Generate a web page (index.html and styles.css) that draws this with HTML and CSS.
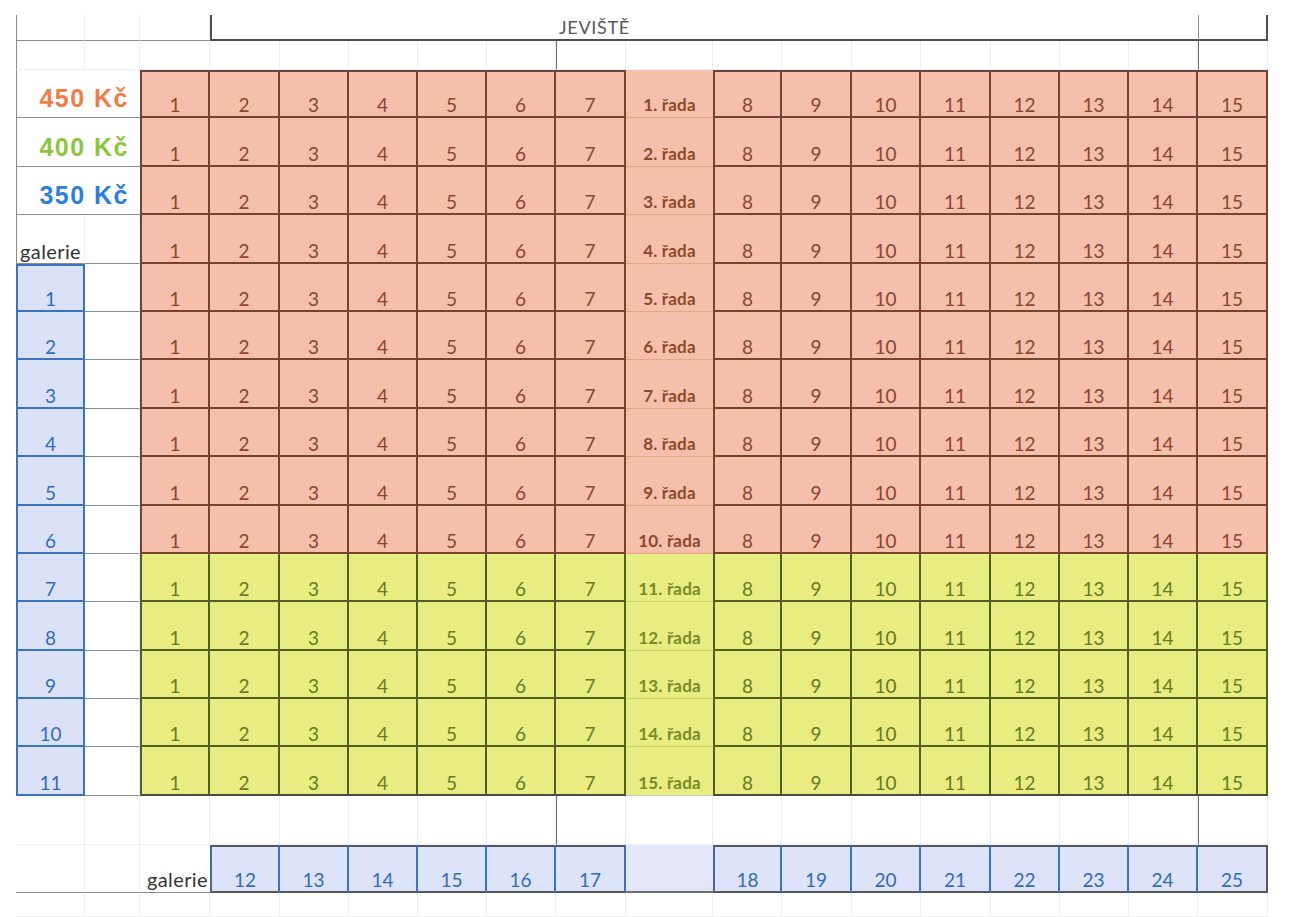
FILE: index.html
```html
<!DOCTYPE html>
<html lang="cs">
<head>
<meta charset="utf-8">
<title>Jeviště – plán sálu</title>
<link rel="stylesheet" href="styles.css">
</head>
<body>
<div class="sheet">
  <!-- row 1: stage -->
  <div class="x lg bk"></div><div class="x bk"></div><div class="x bk"></div>
  <div class="stage-l"></div>
  <div class="stage-m">JEVIŠTĚ</div>
  <div class="stage-r"></div>

  <!-- row 2 -->
  <div class="x lg"></div><div class="x"></div><div class="x"></div>
  <div class="x"></div><div class="x"></div><div class="x"></div><div class="x"></div><div class="x"></div>
  <div class="x vl"></div>
  <div class="x"></div><div class="x"></div><div class="x"></div><div class="x"></div><div class="x"></div><div class="x"></div><div class="x"></div><div class="x"></div>
  <div class="x vl"></div>

  <!-- seat rows -->
  <div class="row pink top">
    <div class="price orange">450 Kč</div>
    <div class="s fl">1</div><div class="s">2</div><div class="s">3</div><div class="s">4</div><div class="s">5</div><div class="s">6</div><div class="s">7</div>
    <div class="r">1. řada</div>
    <div class="s fl">8</div><div class="s">9</div><div class="s">10</div><div class="s">11</div><div class="s">12</div><div class="s">13</div><div class="s">14</div><div class="s">15</div>
  </div>
  <div class="row pink">
    <div class="price green">400 Kč</div>
    <div class="s fl">1</div><div class="s">2</div><div class="s">3</div><div class="s">4</div><div class="s">5</div><div class="s">6</div><div class="s">7</div>
    <div class="r">2. řada</div>
    <div class="s fl">8</div><div class="s">9</div><div class="s">10</div><div class="s">11</div><div class="s">12</div><div class="s">13</div><div class="s">14</div><div class="s">15</div>
  </div>
  <div class="row pink">
    <div class="price blue">350 Kč</div>
    <div class="s fl">1</div><div class="s">2</div><div class="s">3</div><div class="s">4</div><div class="s">5</div><div class="s">6</div><div class="s">7</div>
    <div class="r">3. řada</div>
    <div class="s fl">8</div><div class="s">9</div><div class="s">10</div><div class="s">11</div><div class="s">12</div><div class="s">13</div><div class="s">14</div><div class="s">15</div>
  </div>
  <div class="row pink">
    <div class="x lg bk gal-label">galerie</div><div class="x bk"></div>
    <div class="s fl">1</div><div class="s">2</div><div class="s">3</div><div class="s">4</div><div class="s">5</div><div class="s">6</div><div class="s">7</div>
    <div class="r">4. řada</div>
    <div class="s fl">8</div><div class="s">9</div><div class="s">10</div><div class="s">11</div><div class="s">12</div><div class="s">13</div><div class="s">14</div><div class="s">15</div>
  </div>
  <div class="row pink">
    <div class="gb first">1</div><div class="x bk"></div>
    <div class="s fl">1</div><div class="s">2</div><div class="s">3</div><div class="s">4</div><div class="s">5</div><div class="s">6</div><div class="s">7</div>
    <div class="r">5. řada</div>
    <div class="s fl">8</div><div class="s">9</div><div class="s">10</div><div class="s">11</div><div class="s">12</div><div class="s">13</div><div class="s">14</div><div class="s">15</div>
  </div>
  <div class="row pink">
    <div class="gb">2</div><div class="x bk"></div>
    <div class="s fl">1</div><div class="s">2</div><div class="s">3</div><div class="s">4</div><div class="s">5</div><div class="s">6</div><div class="s">7</div>
    <div class="r">6. řada</div>
    <div class="s fl">8</div><div class="s">9</div><div class="s">10</div><div class="s">11</div><div class="s">12</div><div class="s">13</div><div class="s">14</div><div class="s">15</div>
  </div>
  <div class="row pink">
    <div class="gb">3</div><div class="x bk"></div>
    <div class="s fl">1</div><div class="s">2</div><div class="s">3</div><div class="s">4</div><div class="s">5</div><div class="s">6</div><div class="s">7</div>
    <div class="r">7. řada</div>
    <div class="s fl">8</div><div class="s">9</div><div class="s">10</div><div class="s">11</div><div class="s">12</div><div class="s">13</div><div class="s">14</div><div class="s">15</div>
  </div>
  <div class="row pink">
    <div class="gb">4</div><div class="x bk"></div>
    <div class="s fl">1</div><div class="s">2</div><div class="s">3</div><div class="s">4</div><div class="s">5</div><div class="s">6</div><div class="s">7</div>
    <div class="r">8. řada</div>
    <div class="s fl">8</div><div class="s">9</div><div class="s">10</div><div class="s">11</div><div class="s">12</div><div class="s">13</div><div class="s">14</div><div class="s">15</div>
  </div>
  <div class="row pink">
    <div class="gb">5</div><div class="x bk"></div>
    <div class="s fl">1</div><div class="s">2</div><div class="s">3</div><div class="s">4</div><div class="s">5</div><div class="s">6</div><div class="s">7</div>
    <div class="r">9. řada</div>
    <div class="s fl">8</div><div class="s">9</div><div class="s">10</div><div class="s">11</div><div class="s">12</div><div class="s">13</div><div class="s">14</div><div class="s">15</div>
  </div>
  <div class="row pink">
    <div class="gb">6</div><div class="x bk"></div>
    <div class="s fl">1</div><div class="s">2</div><div class="s">3</div><div class="s">4</div><div class="s">5</div><div class="s">6</div><div class="s">7</div>
    <div class="r">10. řada</div>
    <div class="s fl">8</div><div class="s">9</div><div class="s">10</div><div class="s">11</div><div class="s">12</div><div class="s">13</div><div class="s">14</div><div class="s">15</div>
  </div>
  <div class="row lime">
    <div class="gb">7</div><div class="x bk"></div>
    <div class="s fl">1</div><div class="s">2</div><div class="s">3</div><div class="s">4</div><div class="s">5</div><div class="s">6</div><div class="s">7</div>
    <div class="r">11. řada</div>
    <div class="s fl">8</div><div class="s">9</div><div class="s">10</div><div class="s">11</div><div class="s">12</div><div class="s">13</div><div class="s">14</div><div class="s">15</div>
  </div>
  <div class="row lime">
    <div class="gb">8</div><div class="x bk"></div>
    <div class="s fl">1</div><div class="s">2</div><div class="s">3</div><div class="s">4</div><div class="s">5</div><div class="s">6</div><div class="s">7</div>
    <div class="r">12. řada</div>
    <div class="s fl">8</div><div class="s">9</div><div class="s">10</div><div class="s">11</div><div class="s">12</div><div class="s">13</div><div class="s">14</div><div class="s">15</div>
  </div>
  <div class="row lime">
    <div class="gb">9</div><div class="x bk"></div>
    <div class="s fl">1</div><div class="s">2</div><div class="s">3</div><div class="s">4</div><div class="s">5</div><div class="s">6</div><div class="s">7</div>
    <div class="r">13. řada</div>
    <div class="s fl">8</div><div class="s">9</div><div class="s">10</div><div class="s">11</div><div class="s">12</div><div class="s">13</div><div class="s">14</div><div class="s">15</div>
  </div>
  <div class="row lime">
    <div class="gb">10</div><div class="x bk"></div>
    <div class="s fl">1</div><div class="s">2</div><div class="s">3</div><div class="s">4</div><div class="s">5</div><div class="s">6</div><div class="s">7</div>
    <div class="r">14. řada</div>
    <div class="s fl">8</div><div class="s">9</div><div class="s">10</div><div class="s">11</div><div class="s">12</div><div class="s">13</div><div class="s">14</div><div class="s">15</div>
  </div>
  <div class="row lime last">
    <div class="gb">11</div><div class="x bk"></div>
    <div class="s fl">1</div><div class="s">2</div><div class="s">3</div><div class="s">4</div><div class="s">5</div><div class="s">6</div><div class="s">7</div>
    <div class="r">15. řada</div>
    <div class="s fl">8</div><div class="s">9</div><div class="s">10</div><div class="s">11</div><div class="s">12</div><div class="s">13</div><div class="s">14</div><div class="s">15</div>
  </div>

  <!-- gap row -->
  <div class="x"></div><div class="x"></div><div class="x"></div>
  <div class="x"></div><div class="x"></div><div class="x"></div><div class="x"></div><div class="x"></div>
  <div class="x vl"></div>
  <div class="x"></div><div class="x"></div><div class="x"></div><div class="x"></div><div class="x"></div><div class="x"></div><div class="x"></div><div class="x"></div>
  <div class="x vl"></div>

  <!-- bottom gallery row -->
  <div class="x bk"></div><div class="x bk"></div>
  <div class="x bk gal-bottom">galerie</div>
  <div class="bb fl">12</div><div class="bb">13</div><div class="bb">14</div><div class="bb">15</div><div class="bb">16</div><div class="bb">17</div>
  <div class="bb-fill"></div>
  <div class="bb fl">18</div><div class="bb">19</div><div class="bb">20</div><div class="bb">21</div><div class="bb">22</div><div class="bb">23</div><div class="bb">24</div><div class="bb end">25</div>

  <!-- trailing row -->
  <div class="x"></div><div class="x"></div><div class="x"></div><div class="x"></div><div class="x"></div><div class="x"></div>
  <div class="x"></div><div class="x"></div><div class="x"></div><div class="x"></div><div class="x"></div><div class="x"></div>
  <div class="x"></div><div class="x"></div><div class="x"></div><div class="x"></div><div class="x"></div><div class="x"></div>
</div>
</body>
</html>
```

FILE: styles.css
```css
* {
  box-sizing: border-box;
}

html,
body {
  margin: 0;
  padding: 0;
  background: #ffffff;
}

body {
  font-family: Lato, "Open Sans", "DejaVu Sans", sans-serif;
}

.sheet {
  display: grid;
  grid-template-columns: 69px 55px 70px 70px 69px 69px 69px 69px 70px 87px 69px 70px 69px 70px 69px 69px 69px 70px;
  grid-template-rows: 26px 29px repeat(15, 48.4px) 49px 48px 24px;
  width: 1252px;
  margin: 15px 0 0 16px;
}

.row {
  display: contents;
}

/* blank spreadsheet cells with faint gridlines */
.x {
  border-right: 1px solid #eceef3;
  border-bottom: 1px solid #eceef3;
}

.lg {
  border-left: 1px solid #8c8c8c;
}

.bk {
  border-bottom-color: #8c8c8c;
}

.vl {
  border-left: 1px solid #6e6e6e;
}

/* stage */
.stage-l {
  grid-column: span 5;
  border-left: 2px solid #4e4e4e;
  border-bottom: 2px solid #4e4e4e;
}

.stage-m {
  grid-column: span 9;
  border-bottom: 2px solid #4e4e4e;
  display: flex;
  align-items: flex-end;
  padding: 0 0 2px 3px;
  font-size: 18px;
  line-height: 20px;
  letter-spacing: 0.7px;
  color: #55585e;
}

.stage-r {
  border-left: 1px solid #8c8c8c;
  border-right: 2px solid #4e4e4e;
  border-bottom: 2px solid #4e4e4e;
}

/* price legend */
.price {
  grid-column: span 2;
  display: flex;
  align-items: flex-end;
  justify-content: flex-end;
  padding: 0 11px 6px 0;
  border-left: 1px solid #8c8c8c;
  border-bottom: 1px solid #8c8c8c;
  font-family: "Liberation Sans", Arial, sans-serif;
  font-weight: bold;
  font-size: 25px;
  line-height: 25px;
  letter-spacing: 1.5px;
}

.orange { color: #f27c45; }
.green { color: #8cc640; }
.blue { color: #2c7fdd; }

.gal-label {
  display: flex;
  align-items: flex-end;
  padding: 0 0 2px 3px;
  font-size: 20px;
  line-height: 20px;
  letter-spacing: 0.4px;
  color: #333333;
}

/* seats */
.s {
  display: flex;
  align-items: flex-end;
  justify-content: center;
  padding-bottom: 1px;
  font-size: 19px;
  line-height: 20px;
}

.r {
  display: flex;
  align-items: flex-end;
  justify-content: center;
  padding-bottom: 2px;
  font-size: 17px;
  line-height: 20px;
  font-weight: bold;
  letter-spacing: 0.2px;
}

.pink .s {
  background: #f6bfab;
  color: #8a4630;
  border-right: 2px solid #74452c;
  border-bottom: 2px solid #74452c;
}

.pink .s.fl {
  border-left: 2px solid #74452c;
}

.top .s {
  border-top: 2px solid #5e4a40;
}

.pink .r {
  background: #f6bfab;
  color: #8c4a2c;
  border-bottom: 1px solid #eaa47f;
}

.lime .s {
  background: #e7ed80;
  color: #6a7a22;
  border-right: 2px solid #52601f;
  border-bottom: 2px solid #52601f;
}

.lime .s.fl {
  border-left: 2px solid #52601f;
}

.lime .r {
  background: #e7ed80;
  color: #7b8a28;
  border-bottom: 1px solid #cdd46a;
}

.last .s {
  border-bottom-color: #4a4a40;
}

.last .r {
  border-bottom-color: #c8c8b8;
}

/* gallery boxes (left column) */
.gb {
  display: flex;
  align-items: flex-end;
  justify-content: center;
  padding-bottom: 1px;
  background: #dbe2f8;
  color: #2f6cc0;
  border-left: 2px solid #3a72c4;
  border-right: 2px solid #3a72c4;
  border-bottom: 2px solid #3a72c4;
  font-size: 19px;
  line-height: 20px;
}

.gb.first {
  border-top: 2px solid #3a72c4;
}

/* bottom gallery row */
.gal-bottom {
  display: flex;
  align-items: flex-end;
  justify-content: flex-end;
  padding: 0 2px 3px 0;
  font-size: 20px;
  line-height: 20px;
  letter-spacing: 0.4px;
  color: #333333;
  border-right: none;
}

.bb {
  display: flex;
  align-items: flex-end;
  justify-content: center;
  padding-bottom: 1px;
  background: #dde3f8;
  color: #2f6cc0;
  border-top: 2px solid #55585e;
  border-bottom: 2px solid #55585e;
  border-right: 2px solid #3a72c4;
  font-size: 19px;
  line-height: 20px;
}

.bb.fl {
  border-left: 2px solid #4a68a6;
}

.bb.end {
  border-right-color: #55585e;
}

.bb-fill {
  background: #e3e7f8;
  border-bottom: 2px solid #6a6d74;
}
```
